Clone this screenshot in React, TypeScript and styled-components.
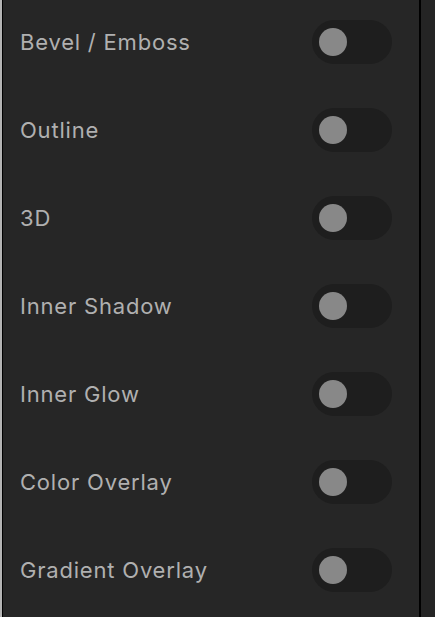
import React, { useState } from 'react'
import styled, { createGlobalStyle } from 'styled-components'

const GlobalStyle = createGlobalStyle`
    html, body {
        margin: 0;
        padding: 0;
        background: #252525;
        height: 100%;
    }
    #root {
        height: 100%;
    }
`

const EFFECTS = ['Bevel / Emboss', 'Outline', '3D', 'Inner Shadow', 'Inner Glow', 'Color Overlay', 'Gradient Overlay']

const Frame = styled.div`
    display: flex;
    height: 617px;
    overflow: hidden;
    background: #252525;
`

const Edge = styled.div`
    width: 2px;
    flex: none;
    background: #b4b4b4;
`

const Panel = styled.div`
    width: 419px;
    flex: none;
    box-sizing: border-box;
    border-left: 1px solid #000;
    border-right: 2px solid #000;
    background: #262626;
    display: flex;
    flex-direction: column;
    gap: 44px;
    padding: 20px 0 0 17px;
`

const Rest = styled.div`
    flex: 1;
    background: #242424;
`

const Row = styled.div`
    display: flex;
    align-items: center;
    justify-content: space-between;
    height: 44px;
    width: 372px;
`

const Label = styled.span`
    font-family: Inter, 'Noto Sans', sans-serif;
    font-size: 22px;
    color: #b0b0b0;
    letter-spacing: 0.8px;
    padding-bottom: 1px;
`

const Track = styled.button<{ on: boolean }>`
    width: 80px;
    height: 44px;
    border: none;
    border-radius: 22px;
    padding: 0 7px;
    display: flex;
    align-items: center;
    justify-content: ${(p) => (p.on ? 'flex-end' : 'flex-start')};
    background: ${(p) => (p.on ? '#4a7cff' : '#1e1e1e')};
    cursor: pointer;
`

const Knob = styled.span`
    width: 28px;
    height: 28px;
    border-radius: 50%;
    background: #888888;
`

export default function App() {
    const [enabled, setEnabled] = useState<Record<string, boolean>>({})

    const toggle = (name: string) => {
        setEnabled({ ...enabled, [name]: !enabled[name] })
    }

    return (
        <>
            <GlobalStyle />
            <Frame>
                <Edge />
                <Panel>
                    {EFFECTS.map((name) => (
                        <Row key={name}>
                            <Label>{name}</Label>
                            <Track on={!!enabled[name]} onClick={() => toggle(name)}>
                                <Knob />
                            </Track>
                        </Row>
                    ))}
                </Panel>
                <Rest />
            </Frame>
        </>
    )
}
